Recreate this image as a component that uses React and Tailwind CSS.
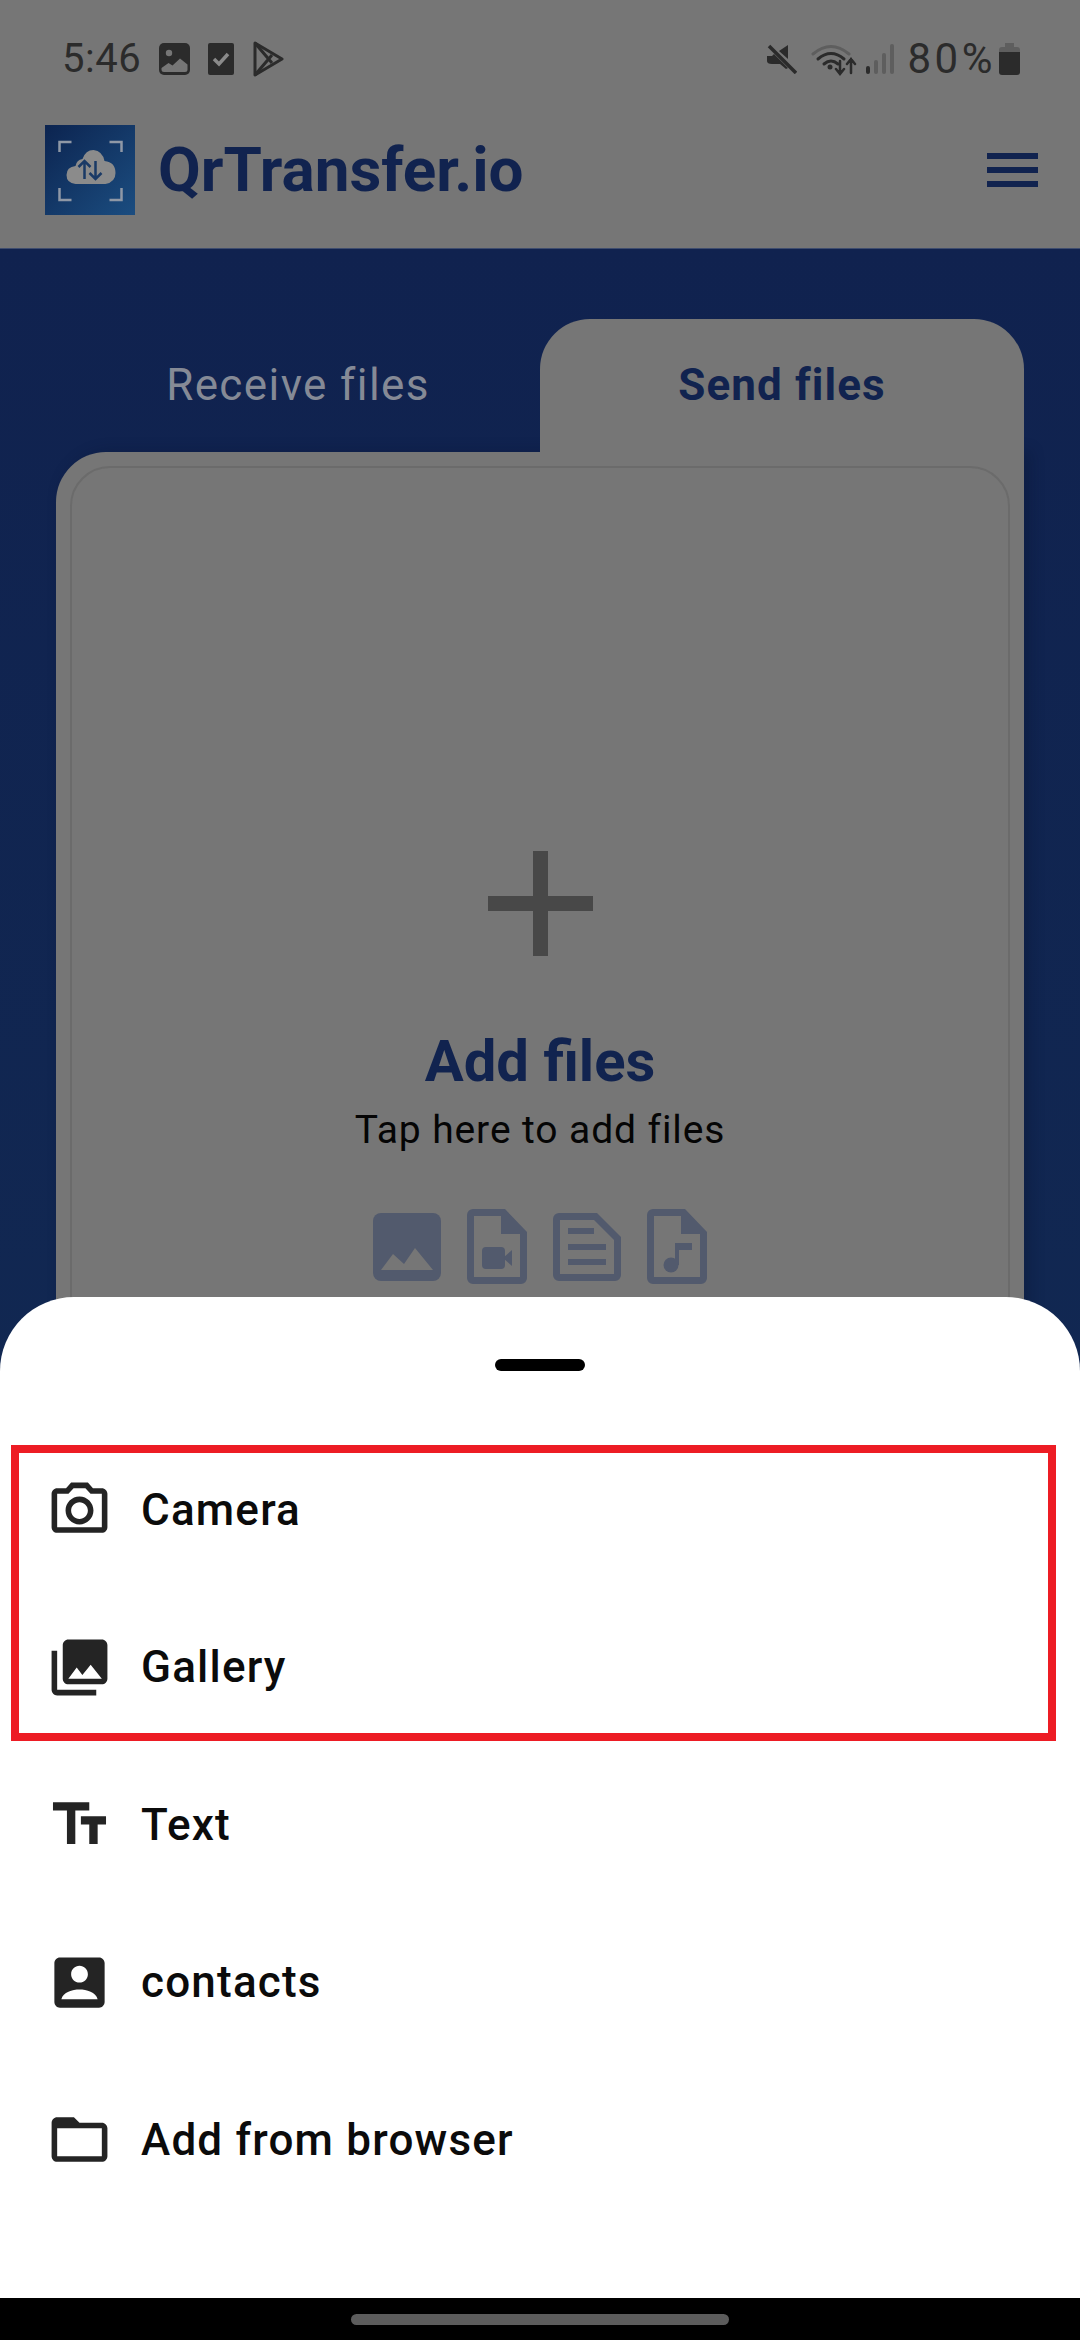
import React from "react";

const roboto = "font-['Roboto',sans-serif]";

function Mi({ d, className = "" }) {
  return (
    <svg viewBox="0 0 24 24" fill="currentColor" className={className}>
      <path d={d} />
    </svg>
  );
}

const rows = [
  {
    label: "Text",
    d: "M2.5 4v3h5v12h3V7h5V4h-13zm19 5h-9v3h3v7h3v-7h3V9z",
  },
  {
    label: "contacts",
    d: "M3 5v14c0 1.1.89 2 2 2h14c1.1 0 2-.9 2-2V5c0-1.1-.9-2-2-2H5c-1.11 0-2 .9-2 2zm12 4c0 1.66-1.34 3-3 3s-3-1.34-3-3 1.34-3 3-3 3 1.34 3 3zM5.5 18c.6-2.6 4-3.5 6.500-3.500s5.900.9 6.500 3.500h-13z",
  },
  {
    label: "Add from browser",
    d: "M20 6h-8l-2-2H4c-1.1 0-1.990.9-1.990 2L2 18c0 1.100.9 2 2 2h16c1.100 0 2-.9 2-2V8c0-1.100-.9-2-2-2zm0 12H4V8h16v10z",
  },
];

const highlighted = [
  {
    label: "Camera",
    d: "M14.120 4l1.830 2H20v12H4V6h4.050l1.830-2h4.240M15 2H9L7.170 4H4c-1.100 0-2 .9-2 2v12c0 1.100.9 2 2 2h16c1.100 0 2-.9 2-2V6c0-1.100-.9-2-2-2h-3.170L15 2zm-3 7c1.650 0 3 1.350 3 3s-1.350 3-3 3-3-1.350-3-3 1.350-3 3-3m0-2c-2.760 0-5 2.240-5 5s2.240 5 5 5 5-2.240 5-5-2.240-5-5-5z",
  },
  {
    label: "Gallery",
    d: "M22 16V4c0-1.100-.9-2-2-2H8c-1.100 0-2 .9-2 2v12c0 1.100.9 2 2 2h12c1.100 0 2-.9 2-2zm-11-4l2.030 2.710L16 11l4 5H8l3-4zM2 6v14c0 1.100.9 2 2 2h14v-2H4V6H2z",
  },
];

function SheetRow({ label, d, className = "h-[157.5px]" }) {
  return (
    <div className={`flex items-center ${className}`}>
      <Mi d={d} className="w-[67px] h-[67px] text-[#242424] shrink-0" />
      <span className="ml-[28px] text-[44px] font-medium text-[#0b0b0b] leading-none tracking-[1.2px]">
        {label}
      </span>
    </div>
  );
}

function StatusBar() {
  return (
    <div className="flex items-center h-[117px] pl-[62px] pr-[60px] pt-[1px]">
      <span className="text-[40px] text-[#2b2b2b] leading-none tracking-[0.5px]">5:46</span>
      <svg viewBox="0 0 31 32" className="w-[31px] h-[32px] ml-[18px]">
        <rect width="31" height="32" rx="5" fill="#2b2b2b" />
        <circle cx="10" cy="10" r="3.200" fill="#767676" />
        <path d="M2.500 25l7-5 4 2.500 7.500-7 7.500 6v5q0 2.500-2.500 2.500H5q-2.500 0-2.500-2.500z" fill="#767676" />
      </svg>
      <svg viewBox="0 0 26 32" className="w-[26px] h-[32px] ml-[18px]">
        <rect width="26" height="32" rx="2" fill="#2b2b2b" />
        <path d="M6 16l5 5 9-10" fill="none" stroke="#8a8a8a" strokeWidth="3.500" />
      </svg>
      <svg viewBox="0 0 32 36" className="w-[32px] h-[36px] ml-[18px]" fill="none" stroke="#2b2b2b" strokeWidth="3" strokeLinejoin="round">
        <path d="M3 2l27 16L3 34z" />
        <path d="M3 2l17 20M3 34l17-20" />
      </svg>

      <div className="flex-1" />

      <svg viewBox="0 0 30 30" className="w-[30px] h-[30px]">
        <path d="M0 12h5l2-2 14 14-2 1-6-5H5q-5 0-5-3z" fill="#2b2b2b" />
        <path d="M12 7l9-6v14z" fill="#2b2b2b" />
        <path d="M2 2l27 27" stroke="#2b2b2b" strokeWidth="3.500" />
      </svg>
      <svg viewBox="0 0 46 34" className="w-[46px] h-[34px] ml-[14px]" fill="none" strokeLinecap="round">
        <path d="M2 12Q20-3 38 12" stroke="#5e5e5e" strokeWidth="3" />
        <path d="M7 17q13-11 26 0M13 22q7-6 14 0" stroke="#2b2b2b" strokeWidth="3" />
        <circle cx="19" cy="25" r="2.500" fill="#2b2b2b" />
        <path d="M29 19v12m-4-4l4 5 4-5M40 31V17m-4 5l4-5 4 5" stroke="#2b2b2b" strokeWidth="2.500" />
      </svg>
      <svg viewBox="0 0 28 30" className="w-[28px] h-[30px] ml-[9px]">
        <rect x="0" y="22" width="4" height="8" rx="2" fill="#2b2b2b" />
        <rect x="8" y="16" width="4" height="14" rx="2" fill="#5e5e5e" />
        <rect x="16" y="9" width="4" height="21" rx="2" fill="#5e5e5e" />
        <rect x="24" y="0" width="4" height="30" rx="2" fill="#5e5e5e" />
      </svg>
      <span className="ml-[14px] text-[42px] text-[#2b2b2b] leading-none tracking-[3.5px]">80%</span>
      <svg viewBox="0 0 21 32" className="w-[21px] h-[32px] ml-[3px]">
        <path d="M6 0h9v4H6z" fill="#5e5e5e" />
        <path d="M3 4h15q3 0 3 3v2H0V7q0-3 3-3z" fill="#5e5e5e" />
        <path d="M0 9h21v20q0 3-3 3H3q-3 0-3-3z" fill="#2b2b2b" />
      </svg>
    </div>
  );
}

function Logo() {
  return (
    <svg viewBox="-1.500 0 90 90" className="w-[90px] h-[90px] shrink-0">
      <defs>
        <linearGradient id="lg" x1="0" y1="0" x2="1" y2="1">
          <stop offset="0" stopColor="#0c2450" />
          <stop offset="1" stopColor="#1b4d80" />
        </linearGradient>
      </defs>
      <rect x="-1.500" width="90" height="90" fill="url(#lg)" />
      <path
        d="M13 27V17h12M63 17h12v10M13 63v12h12M75 63v12H63"
        fill="none"
        stroke="#8f98a6"
        strokeWidth="2.500"
      />
      <path
        d="M29 59q-9-1-9-9t9-9q1-6 7-7 3-9 11-9 9 1 11 11 11 1 11 12 0 9-10 11z"
        fill="#8b8b8b"
      />
      <path
        d="M38 54V36m-6 6l6-6 6 6M49 36v18m-6-6l6 6 6-6"
        fill="none"
        stroke="#1a3a66"
        strokeWidth="2.500"
      />
    </svg>
  );
}

function FileShape({ children }) {
  return (
    <svg viewBox="0 0 60 75" className="w-[60px] h-[75px]">
      <path
        fillRule="evenodd"
        fill="#525a6d"
        d="M6 0H38L60 23V69a6 6 0 0 1-6 6H6a6 6 0 0 1-6-6V6a6 6 0 0 1 6-6zM7 7V68H53V25H34V7z"
      />
      {children}
    </svg>
  );
}

function FileTypes() {
  return (
    <div className="flex items-center mt-[59px]">
      <svg viewBox="0 0 68 68" className="w-[68px] h-[68px]">
        <rect width="68" height="68" rx="8" fill="#525a6d" />
        <path d="M8 57L20 41l11 10 11-16 18 22z" fill="#767676" />
      </svg>
      <div className="w-[26px]" />
      <FileShape>
        <rect x="15" y="38" width="23" height="22" rx="4" fill="#525a6d" />
        <path d="M36 49l9-8v16z" fill="#525a6d" />
      </FileShape>
      <div className="w-[26px]" />
      <svg viewBox="0 0 68 68" className="w-[68px] h-[68px]">
        <path
          fillRule="evenodd"
          fill="#525a6d"
          d="M6 0H44L68 24V62a6 6 0 0 1-6 6H6a6 6 0 0 1-6-6V6a6 6 0 0 1 6-6zM7 7V61H61V27L41 7z"
        />
        <path d="M15 15h26v6H15zM15 31h38v6H15zM15 46h38v6H15z" fill="#525a6d" />
      </svg>
      <div className="w-[26px]" />
      <FileShape>
        <circle cx="24" cy="56" r="7.500" fill="#525a6d" />
        <path d="M28 56V34h17v7H32v15z" fill="#525a6d" />
      </FileShape>
    </div>
  );
}

export default function App() {
  return (
    <div className={`relative w-[1080px] h-[2340px] overflow-hidden flex flex-col bg-black ${roboto}`}>
      <header className="bg-[#767676] h-[249px] shrink-0 border-b border-[#3e4c6e]">
        <StatusBar />
        <div className="flex items-center pl-[45px] pr-[42px] mt-[8px]">
          <Logo />
          <span className="ml-[23px] text-[62px] font-bold text-[#11234f] leading-none">QrTransfer.io</span>
          <div className="flex-1" />
          <div className="flex flex-col gap-[8px]">
            <div className="w-[51px] h-[6px] bg-[#11234f]" />
            <div className="w-[51px] h-[6px] bg-[#11234f]" />
            <div className="w-[51px] h-[6px] bg-[#11234f]" />
          </div>
        </div>
      </header>

      <main className="flex-1 min-h-0 overflow-hidden bg-gradient-to-b from-[#10224f] to-[#122c54] px-[56px] pt-[70px]">
        <div className="flex h-[133px]">
          <div className="w-[484px] flex items-center justify-center text-[44px] text-[#858a96] leading-none tracking-[1.4px] pb-[2px]">
            Receive files
          </div>
          <div className="w-[484px] bg-[#767676] rounded-t-[50px] flex items-center justify-center text-[44px] font-bold text-[#11234f] leading-none tracking-[1.1px] pb-[2px]">
            Send files
          </div>
        </div>
        <div className="bg-[#767676] rounded-tl-[50px] p-[14px] h-[1400px] shadow-[6px_0_14px_rgba(10,20,50,0.35)]">
          <div className="h-full border-2 border-[#6b6b6b] rounded-[40px] flex flex-col items-center pt-[383px]">
            <div className="relative w-[105px] h-[105px]">
              <div className="absolute left-[45px] top-0 w-[15px] h-[105px] bg-[#484848]" />
              <div className="absolute left-0 top-[45px] w-[105px] h-[15px] bg-[#484848]" />
            </div>
            <h2 className="mt-[76px] text-[58px] font-bold text-[#11234f] leading-none">Add files</h2>
            <p className="mt-[21px] text-[39px] text-[#050505] leading-none tracking-[0.9px]">Tap here to add files</p>
            <FileTypes />
          </div>
        </div>
      </main>

      {/* bottom sheet */}
      <section className="absolute left-0 right-0 bottom-[42px] h-[1001px] bg-white rounded-t-[74px] flex flex-col">
        <div className="self-center mt-[62px] w-[90px] h-[12px] rounded-full bg-black" />
        <div className="mt-[74px] mx-[11px] w-[1045px] border-[8px] border-[#ed1c24] pl-[27px] h-[296px] flex flex-col gap-[43px]">
          {highlighted.map((r) => (
            <SheetRow key={r.label} {...r} className="h-[114px] shrink-0" />
          ))}
        </div>
        <div className="pl-[46px] mt-[5px]">
          {rows.map((r) => (
            <SheetRow key={r.label} {...r} />
          ))}
        </div>
      </section>

      <nav className="h-[42px] shrink-0 bg-black flex items-center justify-center">
        <div className="w-[378px] h-[11px] rounded-full bg-[#5c5c5c]" />
      </nav>
    </div>
  );
}
